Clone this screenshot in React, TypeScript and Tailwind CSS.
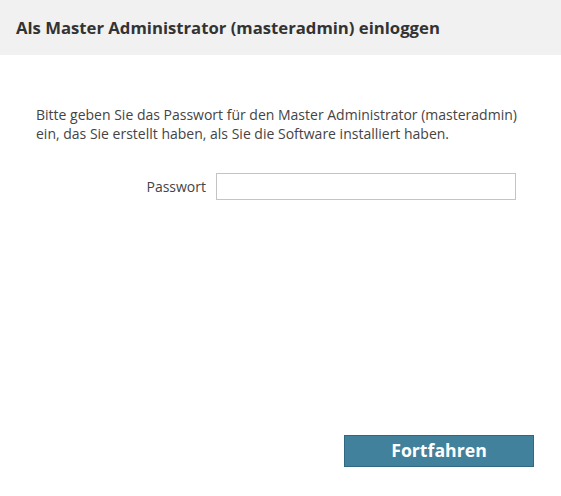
export default function App() {
  return (
    <div className="w-[561px] h-[496px] bg-white flex flex-col font-['Open_Sans',sans-serif] text-[#333]">
      <div className="h-[55px] bg-[#f1f1f1] flex items-center px-4">
        <h1 className="text-[16.7px] font-bold text-[#333]">Als Master Administrator (masteradmin) einloggen</h1>
      </div>
      <div className="flex-1 flex flex-col pt-[50px]">
        <div className="px-9">
          <p className="text-[14px] leading-[19px] text-[#444]">
            Bitte geben Sie das Passwort für den Master Administrator (masteradmin) ein, das Sie erstellt haben, als Sie die Software installiert haben.
          </p>
          <div className="flex items-center mt-[30px]">
            <label className="w-[180px] pr-[10px] text-right text-[14px] text-[#444]">Passwort</label>
            <input type="password" className="w-[300px] h-[27px] border border-[#c4c4c4] bg-white outline-none" />
          </div>
        </div>
        <div className="flex-1" />
        <div className="flex justify-end pr-[27px] pb-[29px]">
          <button className="w-[190px] h-[32px] bg-[#41819b] border border-[#2f6880] text-white text-[17.7px] font-bold leading-none">
            Fortfahren
          </button>
        </div>
      </div>
    </div>
  );
}
